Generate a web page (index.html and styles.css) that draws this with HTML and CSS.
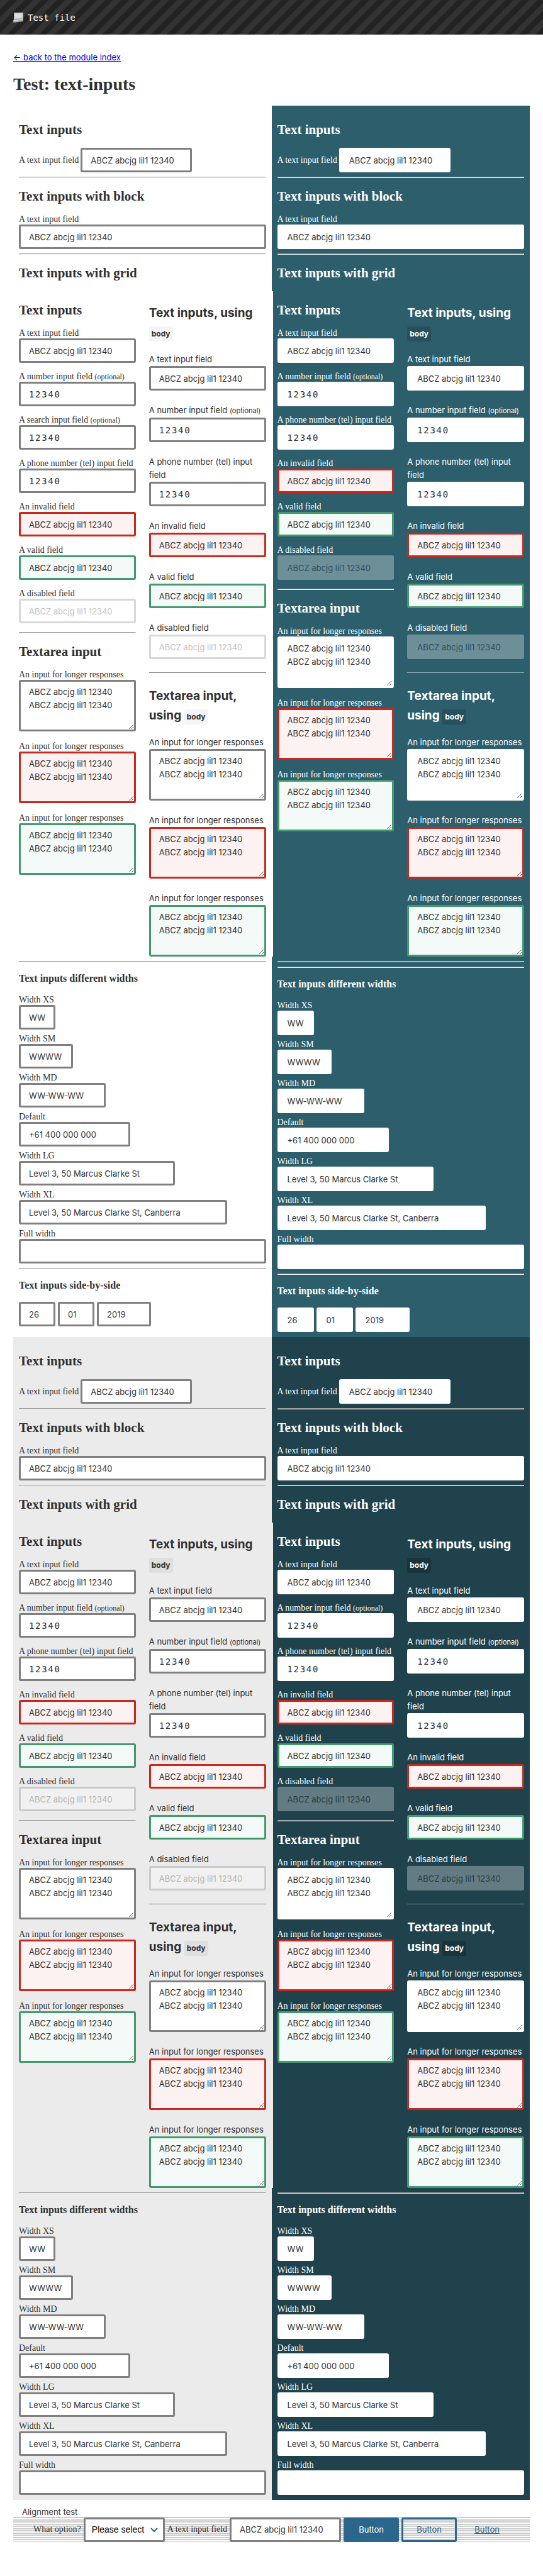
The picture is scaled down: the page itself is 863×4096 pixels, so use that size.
FILE: index.html
```html
<!DOCTYPE html>
<html lang="en">
<head>
<meta charset="utf-8">
<title>Test: text-inputs</title>
<link rel="stylesheet" href="styles.css">
</head>
<body>
<header class="header">
  <svg class="header-icon" width="17" height="17" viewBox="0 0 17 17" aria-hidden="true"><path d="M1 1h15v11H1z" fill="#c4c4c4"/><path d="M3 2.500h11v7H3z" fill="#dcdcdc"/><path d="M1 12l15-2v5L0 17z" fill="#a9a9a9"/><path d="M0 14l16-2" stroke="#dedede"/></svg>
  <span>Test file</span>
</header>
<main class="page">
  <a class="back" href="#">← back to the module index</a>
  <h1>Test: text-inputs</h1>
  <div class="panes">
    <section class="pane">
      <h2>Text inputs</h2>
      <label class="inline">A text input field <input class="text" value="ABCZ abcjg lil1 12340"></label>
      <hr>
      <h2>Text inputs with block</h2>
      <label class="field">A text input field<input class="text block" value="ABCZ abcjg lil1 12340"></label>
      <hr>
      <h2>Text inputs with grid</h2>
      <div class="row">
        <div class="col">
          <h2>Text inputs</h2>
          <div class="stack">
            <label class="field">A text input field<input class="text block" value="ABCZ abcjg lil1 12340"></label>
            <label class="field"><span>A number input field <small>(optional)</small></span><input type="number" class="text block number" value="12340"></label>
            <label class="field"><span>A search input field <small>(optional)</small></span><input type="search" class="text block number" value="12340"></label>
            <label class="field">A phone number (tel) input field<input type="tel" class="text block number" value="12340"></label>
            <label class="field">An invalid field<input class="text block invalid" value="ABCZ abcjg lil1 12340"></label>
            <label class="field">A valid field<input class="text block valid" value="ABCZ abcjg lil1 12340"></label>
            <label class="field">A disabled field<input class="text block" value="ABCZ abcjg lil1 12340" disabled></label>
          </div>
          <hr class="wide">
          <h2>Textarea input</h2>
          <div class="stack areas">
            <label class="field">An input for longer responses<textarea class="text block">ABCZ abcjg lil1 12340
ABCZ abcjg lil1 12340</textarea></label>
            <label class="field">An input for longer responses<textarea class="text block invalid">ABCZ abcjg lil1 12340
ABCZ abcjg lil1 12340</textarea></label>
            <label class="field">An input for longer responses<textarea class="text block valid">ABCZ abcjg lil1 12340
ABCZ abcjg lil1 12340</textarea></label>
          </div>
        </div>
        <div class="col body">
          <h2>Text inputs, using <code>body</code></h2>
          <div class="stack">
            <label class="field">A text input field<input class="text block" value="ABCZ abcjg lil1 12340"></label>
            <label class="field"><span>A number input field <small>(optional)</small></span><input type="number" class="text block number" value="12340"></label>
            <label class="field">A phone number (tel) input field<input type="tel" class="text block number" value="12340"></label>
            <label class="field">An invalid field<input class="text block invalid" value="ABCZ abcjg lil1 12340"></label>
            <label class="field">A valid field<input class="text block valid" value="ABCZ abcjg lil1 12340"></label>
            <label class="field">A disabled field<input class="text block" value="ABCZ abcjg lil1 12340" disabled></label>
          </div>
          <hr>
          <h2>Textarea input, using <code>body</code></h2>
          <div class="stack">
            <label class="field">An input for longer responses<textarea class="text block">ABCZ abcjg lil1 12340
ABCZ abcjg lil1 12340</textarea></label>
            <label class="field">An input for longer responses<textarea class="text block invalid">ABCZ abcjg lil1 12340
ABCZ abcjg lil1 12340</textarea></label>
            <label class="field">An input for longer responses<textarea class="text block valid">ABCZ abcjg lil1 12340
ABCZ abcjg lil1 12340</textarea></label>
          </div>
        </div>
      </div>
      <hr>
      <h3>Text inputs different widths</h3>
      <div class="stack widths">
        <label class="field">Width XS<input class="text xs" value="WW"></label>
        <label class="field">Width SM<input class="text sm" value="WWWW"></label>
        <label class="field">Width MD<input class="text md" value="WW-WW-WW"></label>
        <label class="field">Default<input class="text" value="+61 400 000 000"></label>
        <label class="field">Width LG<input class="text lg" value="Level 3, 50 Marcus Clarke St"></label>
        <label class="field">Width XL<input class="text xl" value="Level 3, 50 Marcus Clarke St, Canberra"></label>
        <label class="field">Full width<input class="text block"></label>
      </div>
      <hr>
      <h3>Text inputs side-by-side</h3>
      <div class="date">
        <input class="text xs" value="26" aria-label="Day">
        <input class="text xs" value="01" aria-label="Month">
        <input class="text sm" value="2019" aria-label="Year">
      </div>
    </section>
    <section class="pane dark">
      <h2>Text inputs</h2>
      <label class="inline">A text input field <input class="text" value="ABCZ abcjg lil1 12340"></label>
      <hr>
      <h2>Text inputs with block</h2>
      <label class="field">A text input field<input class="text block" value="ABCZ abcjg lil1 12340"></label>
      <hr>
      <h2>Text inputs with grid</h2>
      <div class="row">
        <div class="col">
          <h2>Text inputs</h2>
          <div class="stack">
            <label class="field">A text input field<input class="text block" value="ABCZ abcjg lil1 12340"></label>
            <label class="field"><span>A number input field <small>(optional)</small></span><input type="number" class="text block number" value="12340"></label>
            <label class="field">A phone number (tel) input field<input type="tel" class="text block number" value="12340"></label>
            <label class="field">An invalid field<input class="text block invalid" value="ABCZ abcjg lil1 12340"></label>
            <label class="field">A valid field<input class="text block valid" value="ABCZ abcjg lil1 12340"></label>
            <label class="field">A disabled field<input class="text block" value="ABCZ abcjg lil1 12340" disabled></label>
          </div>
          <hr class="wide">
          <h2>Textarea input</h2>
          <div class="stack areas">
            <label class="field">An input for longer responses<textarea class="text block">ABCZ abcjg lil1 12340
ABCZ abcjg lil1 12340</textarea></label>
            <label class="field">An input for longer responses<textarea class="text block invalid">ABCZ abcjg lil1 12340
ABCZ abcjg lil1 12340</textarea></label>
            <label class="field">An input for longer responses<textarea class="text block valid">ABCZ abcjg lil1 12340
ABCZ abcjg lil1 12340</textarea></label>
          </div>
        </div>
        <div class="col body">
          <h2>Text inputs, using <code>body</code></h2>
          <div class="stack">
            <label class="field">A text input field<input class="text block" value="ABCZ abcjg lil1 12340"></label>
            <label class="field"><span>A number input field <small>(optional)</small></span><input type="number" class="text block number" value="12340"></label>
            <label class="field">A phone number (tel) input field<input type="tel" class="text block number" value="12340"></label>
            <label class="field">An invalid field<input class="text block invalid" value="ABCZ abcjg lil1 12340"></label>
            <label class="field">A valid field<input class="text block valid" value="ABCZ abcjg lil1 12340"></label>
            <label class="field">A disabled field<input class="text block" value="ABCZ abcjg lil1 12340" disabled></label>
          </div>
          <hr>
          <h2>Textarea input, using <code>body</code></h2>
          <div class="stack">
            <label class="field">An input for longer responses<textarea class="text block">ABCZ abcjg lil1 12340
ABCZ abcjg lil1 12340</textarea></label>
            <label class="field">An input for longer responses<textarea class="text block invalid">ABCZ abcjg lil1 12340
ABCZ abcjg lil1 12340</textarea></label>
            <label class="field">An input for longer responses<textarea class="text block valid">ABCZ abcjg lil1 12340
ABCZ abcjg lil1 12340</textarea></label>
          </div>
        </div>
      </div>
      <hr>
      <hr>
      <h3>Text inputs different widths</h3>
      <div class="stack widths">
        <label class="field">Width XS<input class="text xs" value="WW"></label>
        <label class="field">Width SM<input class="text sm" value="WWWW"></label>
        <label class="field">Width MD<input class="text md" value="WW-WW-WW"></label>
        <label class="field">Default<input class="text" value="+61 400 000 000"></label>
        <label class="field">Width LG<input class="text lg" value="Level 3, 50 Marcus Clarke St"></label>
        <label class="field">Width XL<input class="text xl" value="Level 3, 50 Marcus Clarke St, Canberra"></label>
        <label class="field">Full width<input class="text block"></label>
      </div>
      <hr>
      <h3>Text inputs side-by-side</h3>
      <div class="date">
        <input class="text xs" value="26" aria-label="Day">
        <input class="text xs" value="01" aria-label="Month">
        <input class="text sm" value="2019" aria-label="Year">
      </div>
    </section>
    <section class="pane alt">
      <h2>Text inputs</h2>
      <label class="inline">A text input field <input class="text" value="ABCZ abcjg lil1 12340"></label>
      <hr>
      <h2>Text inputs with block</h2>
      <label class="field">A text input field<input class="text block" value="ABCZ abcjg lil1 12340"></label>
      <hr>
      <h2>Text inputs with grid</h2>
      <div class="row">
        <div class="col">
          <h2>Text inputs</h2>
          <div class="stack">
            <label class="field">A text input field<input class="text block" value="ABCZ abcjg lil1 12340"></label>
            <label class="field"><span>A number input field <small>(optional)</small></span><input type="number" class="text block number" value="12340"></label>
            <label class="field">A phone number (tel) input field<input type="tel" class="text block number" value="12340"></label>
            <label class="field">An invalid field<input class="text block invalid" value="ABCZ abcjg lil1 12340"></label>
            <label class="field">A valid field<input class="text block valid" value="ABCZ abcjg lil1 12340"></label>
            <label class="field">A disabled field<input class="text block" value="ABCZ abcjg lil1 12340" disabled></label>
          </div>
          <hr class="wide">
          <h2>Textarea input</h2>
          <div class="stack areas">
            <label class="field">An input for longer responses<textarea class="text block">ABCZ abcjg lil1 12340
ABCZ abcjg lil1 12340</textarea></label>
            <label class="field">An input for longer responses<textarea class="text block invalid">ABCZ abcjg lil1 12340
ABCZ abcjg lil1 12340</textarea></label>
            <label class="field">An input for longer responses<textarea class="text block valid">ABCZ abcjg lil1 12340
ABCZ abcjg lil1 12340</textarea></label>
          </div>
        </div>
        <div class="col body">
          <h2>Text inputs, using <code>body</code></h2>
          <div class="stack">
            <label class="field">A text input field<input class="text block" value="ABCZ abcjg lil1 12340"></label>
            <label class="field"><span>A number input field <small>(optional)</small></span><input type="number" class="text block number" value="12340"></label>
            <label class="field">A phone number (tel) input field<input type="tel" class="text block number" value="12340"></label>
            <label class="field">An invalid field<input class="text block invalid" value="ABCZ abcjg lil1 12340"></label>
            <label class="field">A valid field<input class="text block valid" value="ABCZ abcjg lil1 12340"></label>
            <label class="field">A disabled field<input class="text block" value="ABCZ abcjg lil1 12340" disabled></label>
          </div>
          <hr>
          <h2>Textarea input, using <code>body</code></h2>
          <div class="stack">
            <label class="field">An input for longer responses<textarea class="text block">ABCZ abcjg lil1 12340
ABCZ abcjg lil1 12340</textarea></label>
            <label class="field">An input for longer responses<textarea class="text block invalid">ABCZ abcjg lil1 12340
ABCZ abcjg lil1 12340</textarea></label>
            <label class="field">An input for longer responses<textarea class="text block valid">ABCZ abcjg lil1 12340
ABCZ abcjg lil1 12340</textarea></label>
          </div>
        </div>
      </div>
      <hr>
      <h3>Text inputs different widths</h3>
      <div class="stack widths">
        <label class="field">Width XS<input class="text xs" value="WW"></label>
        <label class="field">Width SM<input class="text sm" value="WWWW"></label>
        <label class="field">Width MD<input class="text md" value="WW-WW-WW"></label>
        <label class="field">Default<input class="text" value="+61 400 000 000"></label>
        <label class="field">Width LG<input class="text lg" value="Level 3, 50 Marcus Clarke St"></label>
        <label class="field">Width XL<input class="text xl" value="Level 3, 50 Marcus Clarke St, Canberra"></label>
        <label class="field">Full width<input class="text block"></label>
      </div>
    </section>
    <section class="pane dark alt">
      <h2>Text inputs</h2>
      <label class="inline">A text input field <input class="text" value="ABCZ abcjg lil1 12340"></label>
      <hr>
      <h2>Text inputs with block</h2>
      <label class="field">A text input field<input class="text block" value="ABCZ abcjg lil1 12340"></label>
      <hr>
      <h2>Text inputs with grid</h2>
      <div class="row">
        <div class="col">
          <h2>Text inputs</h2>
          <div class="stack">
            <label class="field">A text input field<input class="text block" value="ABCZ abcjg lil1 12340"></label>
            <label class="field"><span>A number input field <small>(optional)</small></span><input type="number" class="text block number" value="12340"></label>
            <label class="field">A phone number (tel) input field<input type="tel" class="text block number" value="12340"></label>
            <label class="field">An invalid field<input class="text block invalid" value="ABCZ abcjg lil1 12340"></label>
            <label class="field">A valid field<input class="text block valid" value="ABCZ abcjg lil1 12340"></label>
            <label class="field">A disabled field<input class="text block" value="ABCZ abcjg lil1 12340" disabled></label>
          </div>
          <hr class="wide">
          <h2>Textarea input</h2>
          <div class="stack areas">
            <label class="field">An input for longer responses<textarea class="text block">ABCZ abcjg lil1 12340
ABCZ abcjg lil1 12340</textarea></label>
            <label class="field">An input for longer responses<textarea class="text block invalid">ABCZ abcjg lil1 12340
ABCZ abcjg lil1 12340</textarea></label>
            <label class="field">An input for longer responses<textarea class="text block valid">ABCZ abcjg lil1 12340
ABCZ abcjg lil1 12340</textarea></label>
          </div>
        </div>
        <div class="col body">
          <h2>Text inputs, using <code>body</code></h2>
          <div class="stack">
            <label class="field">A text input field<input class="text block" value="ABCZ abcjg lil1 12340"></label>
            <label class="field"><span>A number input field <small>(optional)</small></span><input type="number" class="text block number" value="12340"></label>
            <label class="field">A phone number (tel) input field<input type="tel" class="text block number" value="12340"></label>
            <label class="field">An invalid field<input class="text block invalid" value="ABCZ abcjg lil1 12340"></label>
            <label class="field">A valid field<input class="text block valid" value="ABCZ abcjg lil1 12340"></label>
            <label class="field">A disabled field<input class="text block" value="ABCZ abcjg lil1 12340" disabled></label>
          </div>
          <hr>
          <h2>Textarea input, using <code>body</code></h2>
          <div class="stack">
            <label class="field">An input for longer responses<textarea class="text block">ABCZ abcjg lil1 12340
ABCZ abcjg lil1 12340</textarea></label>
            <label class="field">An input for longer responses<textarea class="text block invalid">ABCZ abcjg lil1 12340
ABCZ abcjg lil1 12340</textarea></label>
            <label class="field">An input for longer responses<textarea class="text block valid">ABCZ abcjg lil1 12340
ABCZ abcjg lil1 12340</textarea></label>
          </div>
        </div>
      </div>
      <hr>
      <h3>Text inputs different widths</h3>
      <div class="stack widths">
        <label class="field">Width XS<input class="text xs" value="WW"></label>
        <label class="field">Width SM<input class="text sm" value="WWWW"></label>
        <label class="field">Width MD<input class="text md" value="WW-WW-WW"></label>
        <label class="field">Default<input class="text" value="+61 400 000 000"></label>
        <label class="field">Width LG<input class="text lg" value="Level 3, 50 Marcus Clarke St"></label>
        <label class="field">Width XL<input class="text xl" value="Level 3, 50 Marcus Clarke St, Canberra"></label>
        <label class="field">Full width<input class="text block"></label>
      </div>
    </section>
  </div>
  <p class="align-title">Alignment test</p>
  <div class="align">
    <label for="option">What option?</label>
    <span class="select-wrap">
      <select id="option" class="select"><option>Please select</option></select>
      <svg class="chevron" width="12" height="8" viewBox="0 0 12 8" aria-hidden="true"><path d="M1 1l5 5 5-5" fill="none" stroke="#2b678d" stroke-width="2"/></svg>
    </span>
    <label for="align-text">A text input field</label>
    <input id="align-text" class="text" value="ABCZ abcjg lil1 12340">
    <button class="btn primary" type="button">Button</button>
    <button class="btn secondary" type="button">Button</button>
    <button class="btn tertiary" type="button">Button</button>
  </div>
</main>
</body>
</html>
```

FILE: styles.css
```css
* { box-sizing: border-box; }

body {
  margin: 0;
  background: #fff;
  color: #313131;
  font: 14px/16px "Liberation Serif", serif;
}

.header {
  display: flex;
  align-items: center;
  gap: 6px;
  height: 55px;
  padding: 0 21px;
  background: repeating-linear-gradient(-45deg, #222 0, #222 9px, #333 9px, #333 18px);
  color: #fff;
  font: 14px/20px "DejaVu Sans Mono", monospace;
}

.page { padding: 26px 21px 55px; }

.back {
  display: block;
  width: fit-content;
  color: #00e;
  font: 13px/21px Inter, sans-serif;
}

h1 {
  margin: 16px 0 18px;
  font-size: 28px;
  line-height: 32px;
}

h2 {
  margin: 17px 0;
  font-size: 21px;
  line-height: 24px;
}

h3 {
  margin: 16px 0;
  font-size: 16px;
  line-height: 20px;
}

hr { margin: 7px 0; }
hr.wide { margin: 14px 0 17px; }

.panes {
  display: grid;
  grid-template-columns: 1fr 1fr;
}

.pane {
  display: flow-root;
  min-width: 0;
  padding: 9px 9px 8px;
  background: var(--bg);
  --bg: #fff;
  --chip: #f5f5f5;
  --rule: #808080;
  --edge: #808080;
}

.alt { --bg: #ebebeb; --chip: #dfdfdf; }
.dark { --bg: #2d5e6c; --chip: #274f5c; --rule: #8fb0b9; --edge: #fff; color: #fff; }
.dark.alt { --bg: #20424c; --chip: #19343c; --rule: #7f9ea6; }

/* the row's gutters reach past the pane's padding */
.row {
  position: relative;
  display: grid;
  grid-template-columns: 1fr 1fr;
  gap: 21px;
  margin: 0 -11px;
  padding: 1px 11px 0;
  background: var(--bg);
}

.dark .row { margin: 0 -7px; padding: 1px 7px 0; }

.pane:not(.dark) .row { margin-left: -9px; padding-left: 9px; }

.col { min-width: 0; }

.inline {
  display: flex;
  align-items: center;
  gap: 3px;
}

.field { display: block; }
small { font-size: 12px; }

.stack { display: grid; gap: 14px; }
.areas { gap: 16px; }
.widths { gap: 7px; }
.date { display: flex; gap: 4px; }

.text {
  display: block;
  width: 177px;
  height: 39px;
  margin: 0;
  padding: 6px 13px;
  border: 3px solid var(--edge, #808080);
  border-radius: 3px;
  background: #fff;
  color: #313131;
  font: 13px/21px Inter, sans-serif;
  appearance: none;
}

.text.block { width: 100%; }
.text.xs { width: 58px; }
.text.sm { width: 86px; }
.text.md { width: 138px; }
.text.lg { width: 248px; }
.text.xl { width: 331px; }

.text.number {
  font: 14px/21px "DejaVu Sans Mono", monospace;
  letter-spacing: 0.12em;
  appearance: textfield;
}

.invalid { border-color: #c9281e; background: #fcf2f1; }
.valid { border-color: #45996f; background: #f4faf7; }
.text:disabled { opacity: 0.3; }

textarea.text {
  height: 82px;
  resize: both;
  overflow: auto;
}

.body { font: 13px/21px Inter, sans-serif; }
.body h2 { margin: 18px 0 17px; font-size: 19px; line-height: 31px; }
.body .stack { gap: 21px; }
.body small { font-size: 11px; }

.body hr {
  margin: 21px 0;
  border: 0;
  border-top: 1px solid var(--rule);
}

.body code {
  display: inline-block;
  padding: 0 4px;
  border-radius: 3px;
  background: var(--chip);
  font: bold 12px/24px Inter, sans-serif;
}

.align-title {
  margin: 11px 14px 0;
  font: 13px/16px Inter, sans-serif;
}

.align {
  display: flex;
  align-items: center;
  gap: 4px;
  min-height: 40px;
  padding-left: 32px;
  background: repeating-linear-gradient(#ccc 0 2px, #fff 2px 4px, #ccc 4px 6px, #fff 6px 7px);
}

.select-wrap { position: relative; }

.select {
  display: block;
  width: 129px;
  height: 39px;
  padding: 0 10px;
  border: 3px solid #808080;
  border-radius: 3px;
  background: #fff;
  color: #000;
  font: 14px/21px "Liberation Sans", sans-serif;
  appearance: none;
}

.chevron {
  position: absolute;
  top: 16px;
  right: 11px;
}

.btn {
  width: 88px;
  height: 39px;
  padding: 0;
  border: 3px solid #2b678d;
  border-radius: 3px;
  background: transparent;
  color: #2b678d;
  font: 13px/21px Inter, sans-serif;
}

.btn.primary { background: #2b678d; color: #fff; }
.btn.tertiary { border-color: transparent; text-decoration: underline; }
```
